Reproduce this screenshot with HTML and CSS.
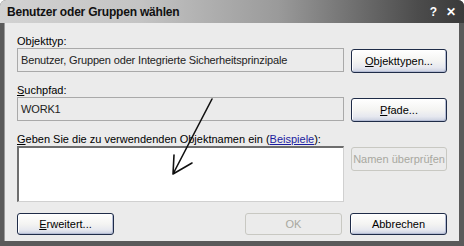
FILE: index.html
```html
<!DOCTYPE html>
<html lang="de">
<head>
  <meta charset="UTF-8" />
  <title>Benutzer oder Gruppen wählen</title>
  <link rel="stylesheet" href="styles.css">
</head>
<body>
  <div class="window">
    <div class="titlebar">
      <span class="title">Benutzer oder Gruppen wählen</span>
      <span class="caption-btns"><span class="help">?</span><span class="close">✕</span></span>
    </div>
    <div class="client">
      <div class="label">Objekttyp:</div>
      <div class="row">
        <div class="field readonly">Benutzer, Gruppen oder Integrierte Sicherheitsprinzipale</div>
        <button class="btn"><u>O</u>bjekttypen...</button>
      </div>

      <div class="label"><u>S</u>uchpfad:</div>
      <div class="row">
        <div class="field readonly">WORK1</div>
        <button class="btn"><u>P</u>fade...</button>
      </div>

      <div class="label"><u>G</u>eben Sie die zu verwendenden Objektnamen ein (<a class="link">Beispiele</a>):</div>
      <div class="row">
        <div class="field names"></div>
        <button class="btn disabled">Namen überprü<u>f</u>en</button>
      </div>

      <div class="footer">
        <button class="btn"><u>E</u>rweitert...</button>
        <div class="footer-right">
          <button class="btn disabled">OK</button>
          <button class="btn">Abbrechen</button>
        </div>
      </div>

      <svg class="arrow" width="464" height="246" viewBox="0 0 464 246">
        <path d="M211 99 L172 174 M172 174 L191 163 M172 174 L173 155" fill="none" stroke="#111" stroke-width="1.6" stroke-linecap="round"/>
      </svg>
    </div>
  </div>
</body>
</html>
```

FILE: styles.css
```css
html, body {
  margin: 0;
  padding: 0;
}

body {
  font-family: 'Liberation Sans', Arial, sans-serif;
  font-size: 11px;
  color: #000;
  background: #fff;
}

.window {
  width: 464px;
  height: 246px;
  box-sizing: border-box;
  background: #5a5a5a;
  border-radius: 6px 6px 0 0;
  display: flex;
  flex-direction: column;
  overflow: hidden;
}

.titlebar {
  height: 23px;
  flex: none;
  display: flex;
  align-items: center;
  justify-content: space-between;
  padding: 0 8px 0 7px;
  background: linear-gradient(to right, #d2d2d2 0%, #c4c4c4 30%, #9a9a9a 60%, #4c4c4c 90%, #3a3a3a 100%);
}

.title {
  font-weight: bold;
  font-size: 12px;
  color: #111;
  letter-spacing: -0.2px;
}

.caption-btns {
  display: flex;
  gap: 9px;
  color: #fff;
  font-weight: bold;
  font-size: 12px;
}

.client {
  position: relative;
  flex: 1;
  margin: 0 5px 5px 4px;
  background: #ebebeb;
  padding: 11px 0 0 12px;
  border-left: 1px solid #9a9a9a;
}

.label {
  height: 14px;
  line-height: 14px;
}

.row {
  display: grid;
  grid-template-columns: 327px 96px;
  column-gap: 7px;
  align-items: start;
  margin-bottom: 10px;
}

.field {
  height: 24px;
  box-sizing: border-box;
  line-height: 22px;
  padding-left: 3px;
  white-space: nowrap;
  overflow: hidden;
}

.readonly {
  background: #ebebeb;
  border: 1px solid #a9a9a9;
  color: #222;
  letter-spacing: -0.15px;
}

.names {
  height: 56px;
  background: #fff;
  border-top: 2px solid #6d6d6d;
  border-left: 2px solid #6d6d6d;
  border-right: 1px solid #d0d0d0;
  border-bottom: 1px solid #d0d0d0;
}

.btn {
  height: 24px;
  width: 96px;
  box-sizing: border-box;
  font-family: inherit;
  font-size: 11px;
  color: #000;
  border: 1px solid #1f2c48;
  border-radius: 3px;
  background: linear-gradient(to bottom, #ffffff 0%, #f4f4f2 50%, #e6e8ef 80%, #c9cfe0 100%);
  box-shadow: inset -1px -1px 0 #b4bcd4, inset 1px 1px 0 #fff;
  padding: 0;
  margin-top: 1px;
}

.btn.disabled {
  color: #a8a8a0;
  border-color: #c8c8c2;
  background: #ebebeb;
  box-shadow: none;
}

.link {
  color: #1c1ca0;
  text-decoration: underline;
}

.footer {
  display: flex;
  justify-content: space-between;
  width: 430px;
  margin-top: 1px;
}

.footer .btn {
  width: 97px;
  height: 22px;
}

.footer-right {
  display: flex;
  gap: 8px;
}

.arrow {
  position: absolute;
  left: -4px;
  top: -23px;
  pointer-events: none;
}
```
